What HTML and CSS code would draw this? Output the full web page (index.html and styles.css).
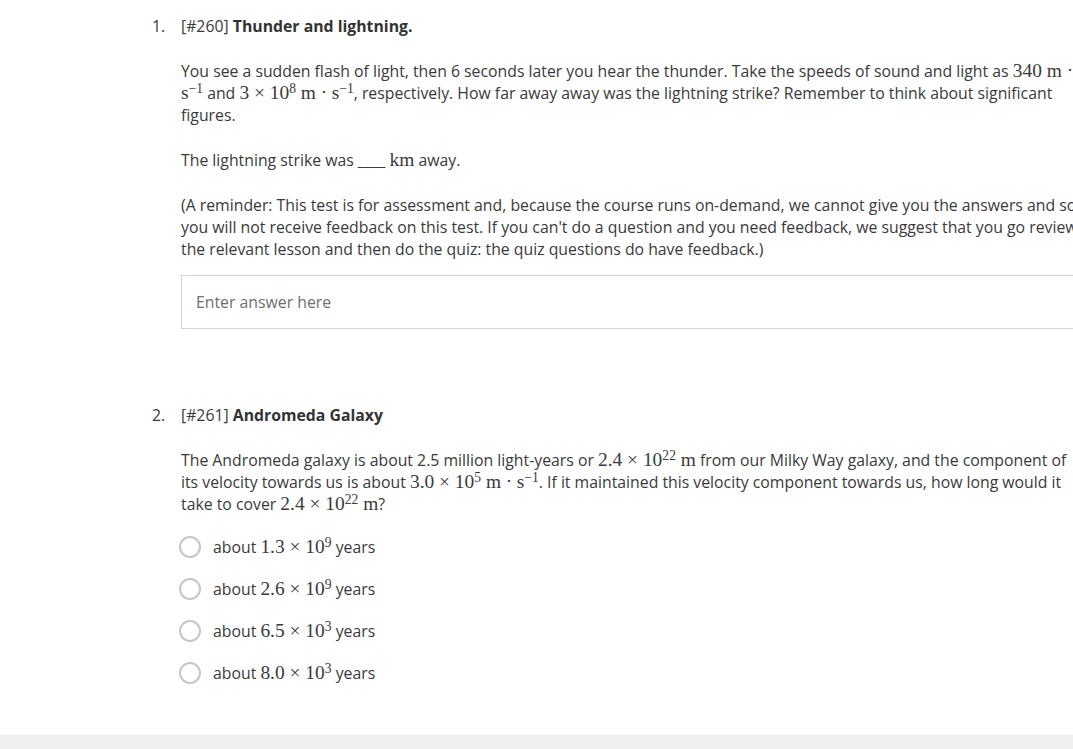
FILE: index.html
```html
<!DOCTYPE html>
<html lang="en">
<head>
<meta charset="utf-8">
<title>Test</title>
<link rel="stylesheet" href="styles.css">
</head>
<body>
<main class="page">
  <ol class="questions">
    <li class="question">
      <div class="q-head">
        <span class="q-num">1.</span>
        <span class="q-title">[#260] <strong>Thunder and lightning.</strong></span>
      </div>
      <div class="q-body">
        <p>You see a sudden flash of light, then 6 seconds later you hear the thunder. Take the speeds of sound and light as <span class="math">340 m ⋅</span> <span class="math">s<sup>−1</sup></span> and <span class="math">3 × 10<sup>8</sup> m ⋅ s<sup>−1</sup></span>, respectively. How far away away was the lightning strike? Remember to think about significant figures.</p>
        <p>The lightning strike was ____ <span class="math">km</span> away.</p>
        <p>(A reminder: This test is for assessment and, because the course runs on-demand, we cannot give you the answers and so you will not receive feedback on this test. If you can't do a question and you need feedback, we suggest that you go review the relevant lesson and then do the quiz: the quiz questions do have feedback.)</p>
        <input class="answer" type="text" placeholder="Enter answer here">
      </div>
    </li>
    <li class="question question-second">
      <div class="q-head">
        <span class="q-num">2.</span>
        <span class="q-title">[#261] <strong>Andromeda Galaxy</strong></span>
      </div>
      <div class="q-body">
        <p>The Andromeda galaxy is about 2.5 million light-years or <span class="math">2.4 × 10<sup>22</sup> m</span> from our Milky Way galaxy, and the component of its velocity towards us is about <span class="math">3.0 × 10<sup>5</sup> m ⋅ s<sup>−1</sup></span>. If it maintained this velocity component towards us, how long would it take to cover <span class="math">2.4 × 10<sup>22</sup> m</span>?</p>
        <ul class="options">
          <li class="option"><span class="radio"></span><span>about <span class="math">1.3 × 10<sup>9</sup></span> years</span></li>
          <li class="option"><span class="radio"></span><span>about <span class="math">2.6 × 10<sup>9</sup></span> years</span></li>
          <li class="option"><span class="radio"></span><span>about <span class="math">6.5 × 10<sup>3</sup></span> years</span></li>
          <li class="option"><span class="radio"></span><span>about <span class="math">8.0 × 10<sup>3</sup></span> years</span></li>
        </ul>
      </div>
    </li>
  </ol>
</main>
<footer class="footer"></footer>
</body>
</html>
```

FILE: styles.css
```css
html, body {
  margin: 0;
  padding: 0;
  background: #ffffff;
  overflow: hidden;
}
body {
  font-family: "Open Sans", "Noto Sans", sans-serif;
  font-size: 15.8px;
  line-height: 22px;
  color: #3a3a3a;
  width: 1073px;
  height: 749px;
}
.page {
  padding: 15px 0 0 152px;
  height: 720px;
}
.questions {
  list-style: none;
  margin: 0;
  padding: 0;
}
.question-second {
  margin-top: 75px;
}
.q-head {
  display: flex;
}
.q-num {
  width: 29px;
  flex: none;
}
.q-title strong {
  font-weight: 700;
  color: #333;
}
.q-body {
  margin-left: 29px;
  width: 900px;
  padding-top: 23px;
}
.q-body p {
  margin: 0 0 23px 0;
}
.math {
  font-family: "Liberation Serif", "Times New Roman", serif;
  font-size: 1.23em;
  line-height: 1;
  white-space: nowrap;
}
.math sup {
  font-size: 0.7em;
  line-height: 0;
  vertical-align: 0.45em;
}
.answer {
  display: block;
  box-sizing: border-box;
  width: 100%;
  height: 54px;
  margin-top: -8px;
  border: 1px solid #d3d3df;
  border-radius: 0;
  padding: 0 14px;
  font-family: "Open Sans", "Noto Sans", sans-serif;
  font-size: 15.8px;
  color: #3a3a3a;
  outline: none;
}
.answer::placeholder {
  color: #6e6e6e;
}
.options {
  list-style: none;
  margin: -12px 0 0 0;
  padding: 0;
}
.option {
  display: flex;
  align-items: center;
  height: 42px;
}
.radio {
  box-sizing: border-box;
  width: 22px;
  height: 22px;
  border: 2px solid #c6c6c6;
  border-radius: 50%;
  margin-left: -2px;
  margin-right: 12px;
  flex: none;
}
.footer {
  height: 40px;
  background: #f0f0f0;
  border-top: 1px solid #ebebeb;
}
```
